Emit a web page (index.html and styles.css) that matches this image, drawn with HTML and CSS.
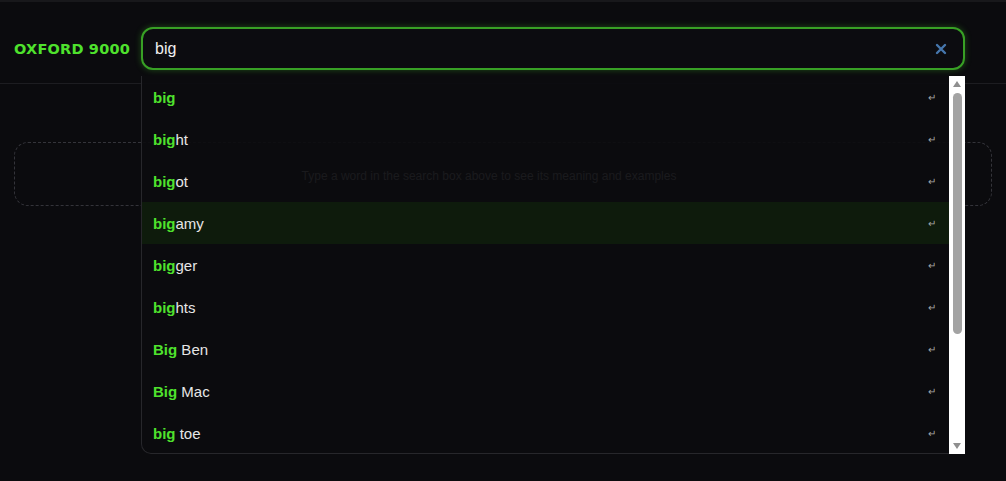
FILE: index.html
```html
<!DOCTYPE html>
<html lang="en">
<head>
    <meta charset="UTF-8">
    <meta name="viewport" content="width=device-width, initial-scale=1.0">
    <title>Oxford 9000</title>
    <link rel="stylesheet" href="styles.css">
</head>
<body>
    <header class="top-bar">
        <div class="brand">OXFORD 9000</div>
        <div class="search">
            <div class="search-box">
                <input type="text" class="search-input" value="big" aria-label="Search word">
                <button class="clear-btn" aria-label="Clear">
                    <svg width="12" height="12" viewBox="0 0 12 12"><path d="M2 2 L10 10 M10 2 L2 10" stroke="currentColor" stroke-width="2.4" stroke-linecap="round"/></svg>
                </button>
            </div>
            <div class="dropdown">
                <ul class="suggestions">
                    <li class="suggestion"><span><b>big</b></span><i>↵</i></li>
                    <li class="suggestion"><span><b>big</b>ht</span><i>↵</i></li>
                    <li class="suggestion"><span><b>big</b>ot</span><i>↵</i></li>
                    <li class="suggestion active"><span><b>big</b>amy</span><i>↵</i></li>
                    <li class="suggestion"><span><b>big</b>ger</span><i>↵</i></li>
                    <li class="suggestion"><span><b>big</b>hts</span><i>↵</i></li>
                    <li class="suggestion"><span><b>Big</b> Ben</span><i>↵</i></li>
                    <li class="suggestion"><span><b>Big</b> Mac</span><i>↵</i></li>
                    <li class="suggestion"><span><b>big</b> toe</span><i>↵</i></li>
                </ul>
                <div class="scrollbar">
                    <span class="arrow up"></span>
                    <div class="track"><div class="thumb"></div></div>
                    <span class="arrow down"></span>
                </div>
            </div>
        </div>
    </header>
    <main class="content">
        <div class="empty-state">Type a word in the search box above to see its meaning and examples</div>
    </main>
</body>
</html>
```

FILE: styles.css
```css
html, body {
    min-height: 100%;
}
body {
    margin: 0;
    min-height: 100vh;
    background-color: #0b0b0e;
    color: #e8e8e8;
    font-family: 'Liberation Sans', Arial, sans-serif;
}
.top-bar {
    display: flex;
    align-items: center;
    gap: 11px;
    padding: 25px 14px 13px;
    border-top: 2px solid #18181b;
    border-bottom: 1px solid #1d1d21;
}
.brand {
    font-family: 'DejaVu Sans', sans-serif;
    font-weight: bold;
    font-size: 14.5px;
    letter-spacing: 0.2px;
    color: #4fe22d;
    white-space: nowrap;
}
.search {
    position: relative;
    flex: 1;
    margin-right: 27px;
}
.search-box {
    display: flex;
    align-items: center;
    height: 39px;
    border: 2px solid #38a025;
    border-radius: 12px;
    background-color: #0c0c10;
    box-shadow: 0 0 6px rgba(70, 200, 40, 0.35);
}
.search-input {
    flex: 1;
    background: none;
    border: none;
    outline: none;
    color: #f0f0f0;
    font-family: 'Liberation Sans', Arial, sans-serif;
    font-size: 16px;
    padding: 0 12px;
}
.clear-btn {
    background: none;
    border: none;
    color: #4677ad;
    padding: 0;
    margin-right: 16px;
    display: flex;
    cursor: pointer;
}
.dropdown {
    position: absolute;
    top: 49px;
    left: 0;
    right: 0;
    height: 377px;
    display: flex;
    background-color: rgba(11, 11, 14, 0.9);
    border: 1px solid #27272b;
    border-top: none;
    border-right: none;
    border-radius: 0 0 0 10px;
    z-index: 10;
}
.suggestions {
    flex: 1;
    margin: 0;
    padding: 0;
    list-style: none;
    overflow: hidden;
}
.suggestion {
    display: flex;
    align-items: center;
    justify-content: space-between;
    height: 42px;
    padding: 0 13px 0 11px;
    font-size: 15px;
    color: #e6e6e6;
}
.suggestion b {
    color: #4fe22d;
}
.suggestion i {
    font-style: normal;
    font-size: 10px;
    color: #a5a5a5;
}
.suggestion.active {
    background-color: #0e1b0c;
}
.scrollbar {
    width: 16px;
    margin-bottom: -1px;
    display: flex;
    flex-direction: column;
    align-items: center;
    background-color: #ffffff;
}
.arrow {
    width: 0;
    height: 0;
    border-left: 4px solid transparent;
    border-right: 4px solid transparent;
    margin: 5px 0;
}
.arrow.up {
    border-bottom: 6px solid #8f8f8f;
}
.arrow.down {
    border-top: 6px solid #8f8f8f;
}
.track {
    flex: 1;
    width: 100%;
    display: flex;
    justify-content: center;
}
.thumb {
    width: 9px;
    height: 241px;
    margin-top: 1px;
    border-radius: 5px;
    background-color: #a3a3a3;
}
.content {
    padding: 58px 14px;
}
.empty-state {
    height: 64px;
    display: flex;
    align-items: center;
    justify-content: center;
    padding: 4px 28px 0 0;
    box-sizing: border-box;
    border: 1px dashed #34343a;
    border-radius: 14px;
    font-size: 12px;
    color: #a0a0a0;
}
```
